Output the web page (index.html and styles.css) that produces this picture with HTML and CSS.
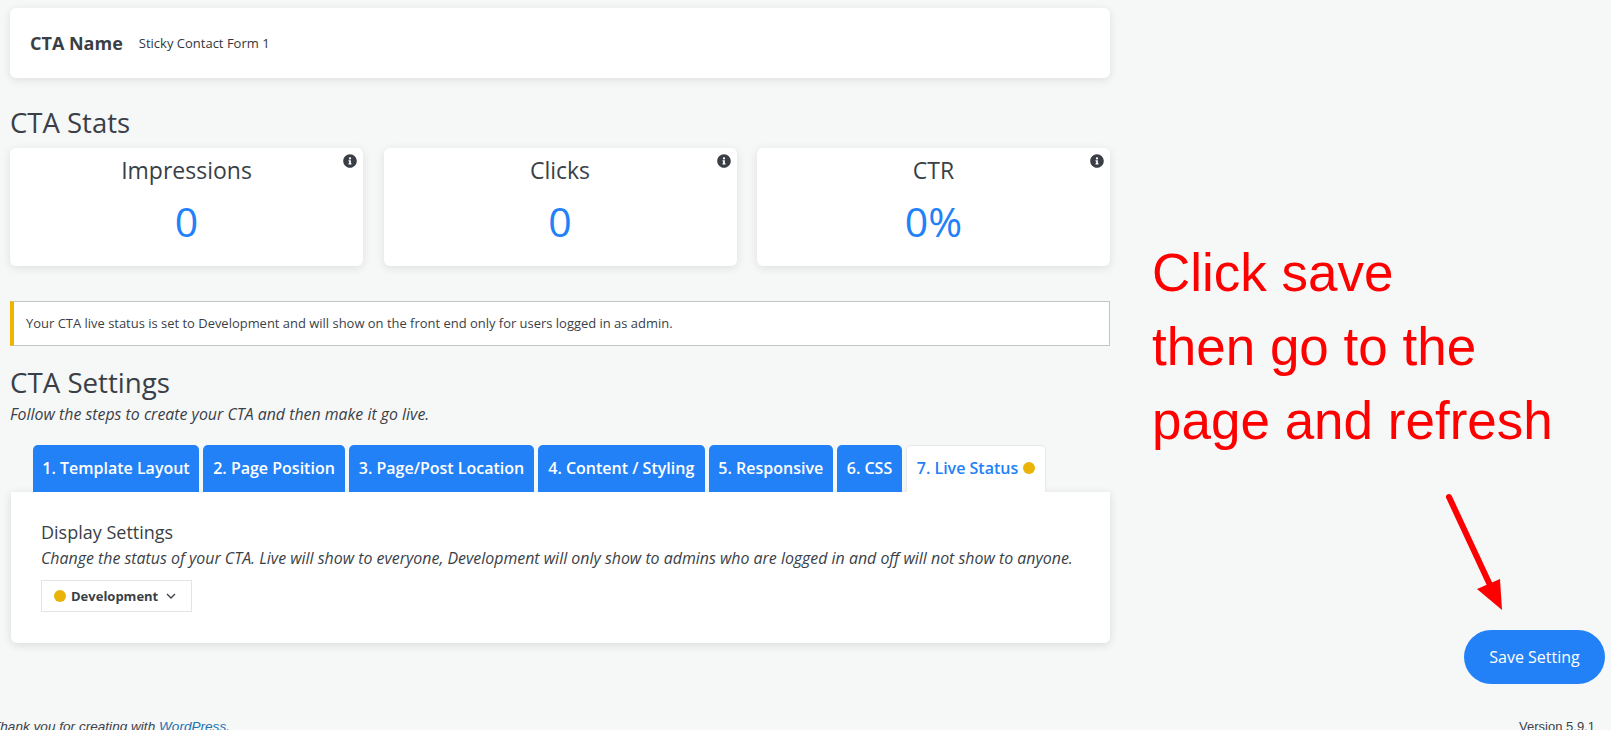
FILE: index.html
```html
<!DOCTYPE html>
<html lang="en">
<head>
<meta charset="utf-8">
<title>CTA Settings</title>
<link rel="stylesheet" href="styles.css">
</head>
<body>
<main class="content">
  <section class="card name-card">
    <strong class="name-label">CTA Name</strong>
    <span class="name-value">Sticky Contact Form 1</span>
  </section>

  <h2 class="section-title stats-title">CTA Stats</h2>
  <section class="stats">
    <div class="card stat">
      <svg class="info" viewBox="0 0 512 512"><path d="M256 8C119 8 8 119 8 256s111 248 248 248 248-111 248-248S393 8 256 8zm0 110a42 42 0 1 1 0 84 42 42 0 0 1 0-84zm56 254c0 7-5 12-12 12h-88c-7 0-12-5-12-12v-24c0-7 5-12 12-12h12v-64h-12c-7 0-12-5-12-12v-24c0-7 5-12 12-12h64c7 0 12 5 12 12v100h12c7 0 12 5 12 12z"/></svg>
      <div class="stat-label">Impressions</div>
      <div class="stat-value">0</div>
    </div>
    <div class="card stat">
      <svg class="info" viewBox="0 0 512 512"><path d="M256 8C119 8 8 119 8 256s111 248 248 248 248-111 248-248S393 8 256 8zm0 110a42 42 0 1 1 0 84 42 42 0 0 1 0-84zm56 254c0 7-5 12-12 12h-88c-7 0-12-5-12-12v-24c0-7 5-12 12-12h12v-64h-12c-7 0-12-5-12-12v-24c0-7 5-12 12-12h64c7 0 12 5 12 12v100h12c7 0 12 5 12 12z"/></svg>
      <div class="stat-label">Clicks</div>
      <div class="stat-value">0</div>
    </div>
    <div class="card stat">
      <svg class="info" viewBox="0 0 512 512"><path d="M256 8C119 8 8 119 8 256s111 248 248 248 248-111 248-248S393 8 256 8zm0 110a42 42 0 1 1 0 84 42 42 0 0 1 0-84zm56 254c0 7-5 12-12 12h-88c-7 0-12-5-12-12v-24c0-7 5-12 12-12h12v-64h-12c-7 0-12-5-12-12v-24c0-7 5-12 12-12h64c7 0 12 5 12 12v100h12c7 0 12 5 12 12z"/></svg>
      <div class="stat-label">CTR</div>
      <div class="stat-value">0%</div>
    </div>
  </section>

  <div class="notice">Your CTA live status is set to Development and will show on the front end only for users logged in as admin.</div>

  <h2 class="section-title settings-title">CTA Settings</h2>
  <p class="subtitle">Follow the steps to create your CTA and then make it go live.</p>

  <nav class="tabs">
    <a class="tab tab-1">1. Template Layout</a>
    <a class="tab tab-2">2. Page Position</a>
    <a class="tab tab-3">3. Page/Post Location</a>
    <a class="tab tab-4">4. Content / Styling</a>
    <a class="tab tab-5">5. Responsive</a>
    <a class="tab tab-6">6. CSS</a>
    <a class="tab tab-active">7. Live Status <span class="dot"></span></a>
  </nav>

  <section class="panel">
    <h3 class="panel-title">Display Settings</h3>
    <p class="panel-text">Change the status of your CTA. Live will show to everyone, Development will only show to admins who are logged in and off will not show to anyone.</p>
    <div class="select">
      <span class="dot"></span>
      <span class="select-text">Development</span>
      <svg class="chevron" viewBox="0 0 10 6"><path d="M1 1l4 4 4-4"/></svg>
    </div>
  </section>
</main>

<footer class="footer">
  <span class="thanks">Thank you for creating with <a class="wp-link">WordPress</a>.</span>
  <span class="version">Version 5.9.1</span>
</footer>

<div class="annotation">Click save<br>then go to the<br>page and refresh</div>
<svg class="arrow" viewBox="0 0 70 125"><path class="arrow-line" d="M5 4L46 92"/><path class="arrow-head" d="M33 96L56 86L58 117Z"/></svg>
<button class="save">Save Setting</button>
</body>
</html>
```

FILE: styles.css
```css
* {
  box-sizing: border-box;
}

html,
body {
  margin: 0;
  height: 730px;
  overflow: hidden;
}

body {
  position: relative;
  background: #f6f7f7;
  color: #3a3f47;
  font-family: "Open Sans", sans-serif;
}

.content {
  width: 1100px;
  margin-left: 10px;
  padding-top: 8px;
}

.card {
  background: #fff;
  border-radius: 6px;
  box-shadow: 0 2px 10px rgba(0, 0, 0, 0.1);
}

.name-card {
  display: flex;
  align-items: center;
  height: 70px;
  padding: 0 20px;
}

.name-label {
  font-size: 18px;
  font-weight: 700;
  line-height: 22px;
}

.name-value {
  margin-left: 16px;
  font-size: 13px;
  line-height: 22px;
  color: #32373c;
}

.section-title {
  margin: 0;
  font-size: 27.5px;
  font-weight: 400;
  line-height: 36px;
}

.stats-title {
  margin-top: 27px;
  height: 43px;
}

.stats {
  display: grid;
  grid-template-columns: repeat(3, 353px);
  justify-content: space-between;
}

.stat {
  position: relative;
  height: 118px;
  padding-top: 6px;
  text-align: center;
}

.info {
  position: absolute;
  top: 6px;
  right: 6px;
  width: 14px;
  height: 14px;
  fill: #3a3f47;
}

.stat-label {
  font-size: 23px;
  line-height: 32px;
}

.stat-value {
  margin-top: 9px;
  font-size: 41px;
  line-height: 52px;
  color: #2381f7;
}

.notice {
  height: 45px;
  margin-top: 35px;
  padding-left: 12px;
  border: 1px solid #c3c4c7;
  border-left: 4px solid #f0b400;
  background: #fff;
  font-size: 12.96px;
  line-height: 43px;
}

.settings-title {
  margin-top: 18px;
  font-size: 27.7px;
}

.subtitle {
  margin: 3px 0 0;
  font-size: 15.9px;
  font-style: italic;
  line-height: 22px;
}

.tabs {
  display: flex;
  gap: 4px;
  height: 47px;
  margin-top: 20px;
  padding-left: 23px;
}

.tab {
  display: flex;
  align-items: center;
  justify-content: center;
  gap: 5px;
  padding-bottom: 2px;
  border-radius: 5px 5px 0 0;
  background: #2381f7;
  color: #fff;
  font-size: 16px;
  font-weight: 600;
  white-space: nowrap;
}

.tab-1 { width: 166px; }
.tab-2 { width: 142px; }
.tab-3 { width: 185px; }
.tab-4 { width: 166.5px; }
.tab-5 { width: 124.5px; }
.tab-6 { width: 65px; }

.tab-active {
  width: 140px;
  border: 1px solid #e6e8ea;
  border-bottom: 0;
  background: #fff;
  color: #2381f7;
}

.dot {
  display: inline-block;
  flex: none;
  width: 12px;
  height: 12px;
  border-radius: 50%;
  background: #e9b308;
}

.panel {
  height: 151px;
  margin-left: 1px;
  padding: 27px 30px 0;
  background: #fff;
  border-radius: 0 0 6px 6px;
  box-shadow: 0 2px 10px rgba(0, 0, 0, 0.12);
}

.panel-title {
  margin: 0;
  font-size: 18px;
  font-weight: 400;
  line-height: 26px;
}

.panel-text {
  margin: 0;
  font-size: 15.92px;
  font-style: italic;
  line-height: 26px;
  white-space: nowrap;
}

.select {
  display: flex;
  align-items: center;
  width: 151px;
  height: 32px;
  margin-top: 9px;
  padding-left: 12px;
  border: 1px solid #e2e4e7;
  background: #fff;
}

.select-text {
  margin-left: 5px;
  font-size: 13px;
  font-weight: 700;
}

.chevron {
  width: 10px;
  height: 6px;
  margin-left: 8px;
  fill: none;
  stroke: #3a3f47;
  stroke-width: 1.3;
}

.footer {
  display: flex;
  justify-content: space-between;
  margin-top: 75px;
  padding-right: 16px;
  font-family: "Liberation Sans", sans-serif;
  font-size: 13px;
  line-height: 18px;
  color: #3c434a;
}

.thanks {
  margin-left: -8px;
  font-size: 13.6px;
  font-style: italic;
}

.wp-link {
  color: #2271b1;
  text-decoration: underline;
}

.annotation {
  position: absolute;
  left: 1152px;
  top: 236px;
  font-family: "Liberation Sans", sans-serif;
  font-size: 53px;
  line-height: 74px;
  color: #f00;
  white-space: nowrap;
}

.arrow {
  position: absolute;
  left: 1444px;
  top: 493px;
  width: 70px;
  height: 125px;
}

.arrow-line {
  fill: none;
  stroke: #f00;
  stroke-width: 6;
  stroke-linecap: round;
}

.arrow-head {
  fill: #f00;
}

.save {
  position: absolute;
  left: 1464px;
  top: 630px;
  width: 141px;
  height: 54px;
  padding: 0;
  border: 0;
  border-radius: 27px;
  background: #2381f7;
  color: #fff;
  font-family: "Open Sans", sans-serif;
  font-size: 16px;
  font-weight: 400;
}
```
